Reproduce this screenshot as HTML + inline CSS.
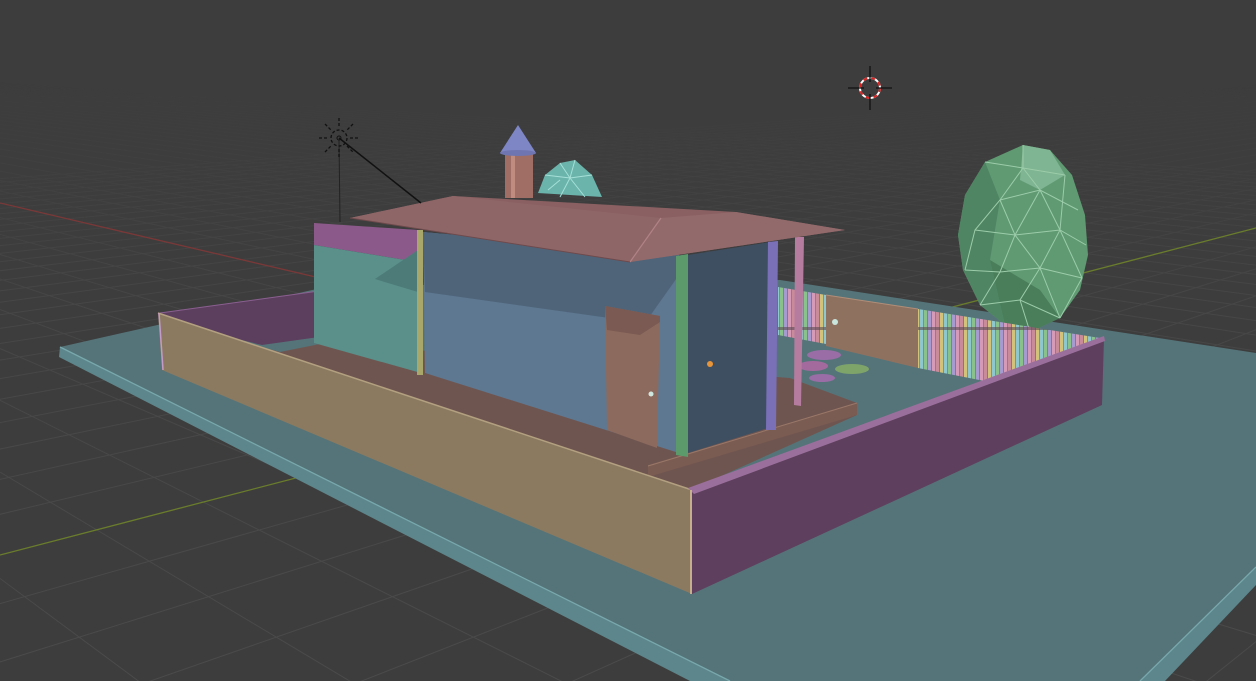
<!DOCTYPE html>
<html><head><meta charset="utf-8"><style>
html,body{margin:0;padding:0;background:#3d3d3d;overflow:hidden;width:1256px;height:681px}
svg{display:block;overflow:hidden}
</style></head><body>
<svg id="s" width="1256" height="681" viewBox="0 0 1256 681" xmlns="http://www.w3.org/2000/svg">
<defs>
<pattern id="pk" width="24" height="60" patternUnits="userSpaceOnUse">
<rect width="24" height="60" fill="#4a5f68"/>
<rect x="0" width="3.5" height="60" fill="#c98a9a"/>
<rect x="4" width="3.5" height="60" fill="#d2c27a"/>
<rect x="8" width="3.5" height="60" fill="#8fc7cf"/>
<rect x="12" width="3.5" height="60" fill="#8ac28c"/>
<rect x="16" width="3.5" height="60" fill="#a59bd0"/>
<rect x="20" width="3.5" height="60" fill="#d49ab8"/>
<rect y="27" width="24" height="3" fill="#5a4a50" opacity=".6"/>
</pattern>
<linearGradient id="gf" x1="0" y1="0" x2="0" y2="1" gradientUnits="objectBoundingBox">
<stop offset="0" stop-color="#fff" stop-opacity="0"/>
<stop offset="0.12" stop-color="#fff" stop-opacity="0"/>
<stop offset="0.45" stop-color="#fff" stop-opacity="0.7"/>
<stop offset="1" stop-color="#fff" stop-opacity="1"/>
</linearGradient>
<mask id="gm" maskUnits="userSpaceOnUse" x="0" y="0" width="1256" height="681"><rect width="1256" height="681" fill="url(#gf)"/></mask>
<clipPath id="cp"><rect width="1256" height="681"/></clipPath>
</defs>
<g clip-path="url(#cp)">
<rect width="1256" height="681" fill="#3d3d3d"/>
<g mask="url(#gm)"><g id="grid" stroke="#4b4b4b" stroke-width="1" fill="none"></g></g>
<line x1="0" y1="203" x2="712" y2="370" stroke="#7a3838" stroke-width="1.3"/>
<line x1="0" y1="555" x2="1256" y2="228" stroke="#6a7d2c" stroke-width="1.3"/>

<!-- plate -->
<polygon points="60,347 330,286 780,280 1256,353 1256,567 1140,681 730,681" fill="#557479"/>
<polygon points="60,347 730,681 690,681 59,357" fill="#5c868b"/>
<line x1="60" y1="347" x2="730" y2="681" stroke="#78a8ac" stroke-width="1.3"/>
<polygon points="1256,567 1140,681 1165,681 1256,585" fill="#5c868b"/>
<line x1="1256" y1="567" x2="1140" y2="681" stroke="#78a8ac" stroke-width="1.3"/>

<!-- tree -->
<polygon points="1023,145 1050,150 1072,175 1085,215 1088,255 1080,290 1060,318 1030,332 1005,325 980,305 963,270 958,235 965,195 985,162" fill="#5f9a72"/>
<polygon points="958,235 965,195 985,162 1000,200 990,260 1005,325 980,305 963,270" fill="#4f8563"/>
<polygon points="990,260 1005,325 1030,332 1060,318 1040,290" fill="#4a7d5a"/>
<polygon points="1023,145 1050,150 1065,175 1040,190 1020,180" fill="#7fb592"/>
<g stroke="#9cccaa" stroke-width="1" fill="none">
<path d="M985,162 L1023,168 L1065,175 M1000,200 L1040,190 L1078,210 M975,230 L1015,235 L1060,230 L1086,245 M965,270 L1000,272 L1040,268 L1082,278 M980,305 L1020,300 L1060,318"/>
<path d="M1023,145 L1023,168 L1000,200 L975,230 L965,270 M1023,168 L1040,190 L1015,235 L1000,272 L980,305 M1040,190 L1060,230 L1040,268 L1020,300 L1030,332 M1065,175 L1060,230 L1082,278 L1060,318 M1000,200 L1015,235 L1040,268 L1060,318"/>
</g>

<!-- back courtyard fences -->
<polygon points="778,287 826,295 826,344 778,335" fill="url(#pk)"/>
<polygon points="826,295 918,309 918,368 826,346" fill="#8f7160"/>
<line x1="826" y1="295" x2="918" y2="309" stroke="#b08e78"/>
<circle cx="835" cy="322" r="3" fill="#c8e6dc"/>
<polygon points="918,309 1100,338 1100,345 1010,386 918,368" fill="url(#pk)"/>

<!-- stones -->
<ellipse cx="824" cy="355" rx="17" ry="5" fill="#9a6da6"/>
<ellipse cx="813" cy="366" rx="15" ry="5" fill="#a36a9e"/>
<ellipse cx="852" cy="369" rx="17" ry="5" fill="#7fa46a"/>
<ellipse cx="822" cy="378" rx="13" ry="4" fill="#9a6da6"/>

<!-- floor / porch -->
<polygon points="265,350 320,343 790,378 857,403 857,415 690,490 160,315" fill="#6f5550"/>
<polygon points="648,477 857,415 857,403 648,465" fill="#7a5c52"/>
<line x1="648" y1="466" x2="857" y2="403" stroke="#9a7868"/>
<polygon points="160,313 319,291 319,337 262,345 200,330" fill="#5c3f5e"/>
<line x1="160" y1="313" x2="319" y2="291" stroke="#8a6090"/>
<polygon points="262,347 319,340 320,344 280,352" fill="#557479"/>

<!-- house left wall -->
<polygon points="314,223 418,230 418,262 314,245" fill="#8c5a8a"/>
<polygon points="314,245 418,262 421,373 314,343" fill="#5a8f8a"/>
<polygon points="375,279 418,250 418,292" fill="#4d7b78"/>
<rect x="417" y="230" width="6" height="145" fill="#a9a86a"/>
<polygon points="423,232 679,255 679,453 425,373" fill="#5e7891"/>
<polygon points="423,232 679,255 679,275 645,323 425,292" fill="#4f6479"/>
<polygon points="605,306 660,316 657,448 607,430" fill="#8c6a5e"/>
<polygon points="605,306 660,316 660,322 640,335 607,330" fill="#7a5a52"/>
<circle cx="651" cy="394" r="2.5" fill="#cfe8df"/>
<polygon points="676,256 688,254 688,457 676,455" fill="#5c9a6b"/>
<polygon points="688,255 771,242 768,428 688,453" fill="#3e4f62"/>
<circle cx="710" cy="364" r="3" fill="#e8953a"/>
<polygon points="768,242 778,241 776,430 766,430" fill="#7a70b8"/>
<polygon points="795,237 804,237 801,406 794,405" fill="#b57ca0"/>

<!-- chimney & dome -->
<polygon points="538,193 545,175 560,163 575,160 592,175 602,197" fill="#6ab4ac"/>
<g stroke="#a6e0d8" stroke-width="1" fill="none"><path d="M545,175 L570,178 L592,175 M560,163 L570,178 L575,160 M570,178 L560,197 M570,178 L585,197 M548,190 L560,180"/></g>
<rect x="505" y="154" width="28" height="44" fill="#a06e64"/>
<rect x="511" y="154" width="4" height="44" fill="#c08c80"/>
<polygon points="518,125 500,153 536,153" fill="#7f86c6"/>
<ellipse cx="518" cy="153" rx="18" ry="3" fill="#6f75b0"/>

<!-- roof -->
<polygon points="350,218 453,196 736,212 845,230 630,262" fill="#8a6062"/>
<polygon points="350,218 453,196 661,218 630,262" fill="#8f6668"/>
<polygon points="661,218 736,212 845,230 630,262" fill="#936a6c"/>
<line x1="630" y1="262" x2="661" y2="218" stroke="#b08486" stroke-width="1.2"/>
<line x1="350" y1="218" x2="630" y2="262" stroke="#6e4a4c"/>

<!-- front fence -->
<polygon points="158,313 692,490 692,594 162,370" fill="#8b7a60"/>
<line x1="158" y1="313" x2="692" y2="490" stroke="#b3a080" stroke-width="1.5"/>
<line x1="159" y1="313" x2="163" y2="370" stroke="#c59ac5" stroke-width="1.5"/>
<polygon points="692,490 1104,338 1102,405 692,594" fill="#5e3f5d"/>
<polygon points="688,488 1104,336 1105,341 694,494" fill="#9a6f9c"/>
<line x1="691" y1="490" x2="691" y2="594" stroke="#c4b08c" stroke-width="2"/>

<!-- lamp -->
<line x1="339" y1="138" x2="421" y2="203" stroke="#111" stroke-width="1.5"/>
<line x1="339" y1="140" x2="340" y2="222" stroke="#222" stroke-width="1"/>
<g stroke="#111" stroke-width="1.3" stroke-dasharray="3,2" fill="none">
<circle cx="339" cy="138" r="8"/>
<path d="M339,118 V127 M339,149 V158 M319,138 H328 M350,138 H359 M325,124 L331,130 M347,146 L353,152 M353,124 L347,130 M325,152 L331,146"/>
</g>
<circle cx="339" cy="138" r="2" fill="none" stroke="#111"/>

<!-- 3D cursor -->
<circle cx="870" cy="88" r="10" fill="none" stroke="#fff" stroke-width="2"/>
<circle cx="870" cy="88" r="10" fill="none" stroke="#d22" stroke-width="2" stroke-dasharray="4,4"/>
<g stroke="#111" stroke-width="1.3"><path d="M870,66 V82 M870,94 V110 M848,88 H864 M876,88 H892"/></g>
</g>
</svg>
<script>
(function(){
var g=document.getElementById('grid');
var O=[712,370],R=[-740,30],G=[2019,30],b=0.04;
function line(V,P){var dx=P[0]-V[0],dy=P[1]-V[1];var L=Math.sqrt(dx*dx+dy*dy);var x2=V[0]+dx/L*5000,y2=V[1]+dy/L*5000;
var l=document.createElementNS('http://www.w3.org/2000/svg','line');l.setAttribute('x1',V[0]);l.setAttribute('y1',V[1]);l.setAttribute('x2',x2);l.setAttribute('y2',y2);g.appendChild(l);}
for(var v=-30;v<=30;v++){if(v==0)continue;var x=O[0]+b*v*(G[0]-R[0]),y=O[1]+b*v*(G[1]-R[1]);line(R,[x,y]);}
for(var u=-30;u<=30;u++){if(u==0)continue;var x=O[0]+b*u*(R[0]-G[0]),y=O[1]+b*u*(R[1]-G[1]);line(G,[x,y]);}
})();
</script>
</body></html>
